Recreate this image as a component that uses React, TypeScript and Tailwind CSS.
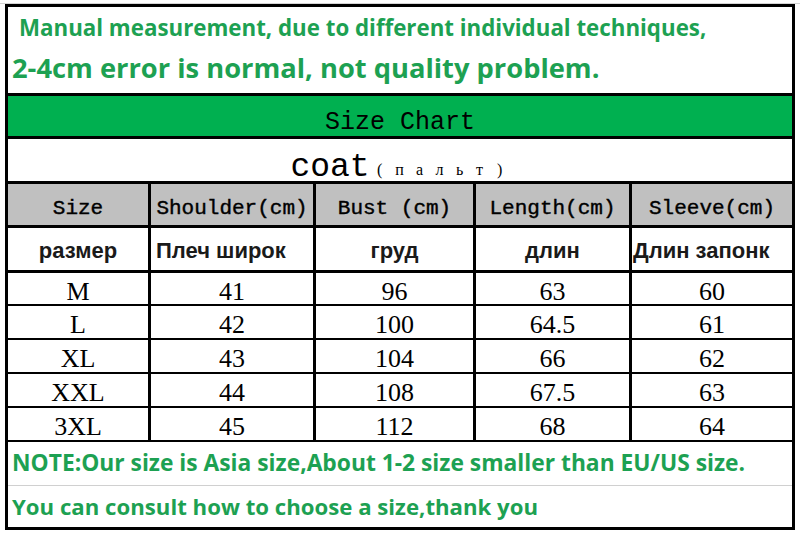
import React from "react";

const green = "text-[#1da152]";
const sansBold = "font-['Open_Sans',sans-serif] font-bold";
const mono = "font-['Liberation_Mono',monospace]";
const serif = "font-['Liberation_Serif',serif]";

const cols = "grid grid-cols-[140px_162px_157px_153px_160px] grid-rows-1 gap-x-[3px] overflow-hidden";

const headers = ["Size", "Shoulder(cm)", "Bust (cm)", "Length(cm)", "Sleeve(cm)"];

const rows = [
  ["M", "41", "96", "63", "60"],
  ["L", "42", "100", "64.5", "61"],
  ["XL", "43", "104", "66", "62"],
  ["XXL", "44", "108", "67.5", "63"],
  ["3XL", "45", "112", "68", "64"],
];

export default function App() {
  return (
    <div className="w-[800px] h-[536px] bg-white overflow-hidden">
      <div className="h-[4px] border-b border-[#d4d4d4]" />
      <div className="ml-[5px] w-[790px] bg-black p-[3px] flex flex-col">
        {/* top note */}
        <div className={`h-[86px] bg-white flex flex-col ${sansBold} ${green}`}>
          <div className="h-[44px] pl-[11px] pt-[7px] text-[22.3px] leading-[28px]">
            Manual measurement, due to different individual techniques,
          </div>
          <div className="pl-[4px] text-[27.3px] leading-[32px] pt-[1px]">
            2-4cm error is normal, not quality problem.
          </div>
        </div>

        <div className={`mt-[3px] h-[40px] bg-[#00b050] flex items-center justify-center pt-[13px] ${mono} text-[25px] text-black`}>
          Size Chart
        </div>

        <div className="mt-[3px] h-[42px] bg-white flex items-center justify-center pt-[14px] text-black">
          <span className={`${mono} text-[33px] leading-none`}>coat</span>
          {["(", "п", "а", "л", "ь", "т", ")"].map((c, i) => (
            <span key={i} className={`${serif} w-[20px] text-center text-[16px] pt-[6px]`}>
              {c}
            </span>
          ))}
        </div>

        <div className={`mt-[3px] h-[41px] ${cols}`}>
          {headers.map((h) => (
            <div key={h} className={`bg-[#c0c0c0] flex items-center justify-center ${mono} text-[21px] leading-none text-black [-webkit-text-stroke:0.4px_black]`}>
              <span className="translate-y-[4px]">{h}</span>
            </div>
          ))}
        </div>

        <div className={`mt-[3px] h-[42px] ${cols} font-['Liberation_Sans',sans-serif] font-bold text-[22px] leading-none text-[#1a1a1a]`}>
          <div className="bg-white flex items-center justify-center pt-[3px]">размер</div>
          <div className="bg-white flex items-center pl-[5px] pt-[3px]">Плеч широк</div>
          <div className="bg-white flex items-center justify-center pt-[3px]">груд</div>
          <div className="bg-white flex items-center justify-center pt-[3px]">длин</div>
          <div className="bg-white flex items-center pl-[1px] pt-[3px]">Длин запонк</div>
        </div>

        {rows.map((r, i) => (
          <div
            key={r[0]}
            className={`${i === 0 ? "mt-[3px] h-[31px]" : "mt-[2px] h-[32px]"} ${cols} ${serif} text-[26px] text-black`}
          >
            {r.map((v, j) => (
              <div key={j} className="bg-white flex items-center justify-center leading-none">
                <span className="translate-y-[3px]">{v}</span>
              </div>
            ))}
          </div>
        ))}

        <div className={`mt-[2px] h-[85px] bg-white flex flex-col ${sansBold} ${green}`}>
          <div className="h-[44px] pl-[4px] flex items-center border-b border-[#d0d0d0] text-[22.8px]">
            NOTE:Our size is Asia size,About 1-2 size smaller than EU/US size.
          </div>
          <div className="flex-1 pl-[4px] flex items-center text-[22.2px]">
            You can consult how to choose a size,thank you
          </div>
        </div>
      </div>
    </div>
  );
}
